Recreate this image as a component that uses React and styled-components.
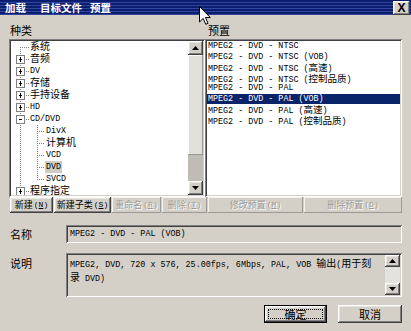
import React from "react"
import styled, { createGlobalStyle, css } from "styled-components"

const FACE = "#d4d0c8"
const NAVY = "#0a246a"
const MONO = 8.4

const GlobalStyle = createGlobalStyle`
  html, body {
    margin: 0;
    padding: 0;
    background: ${FACE};
  }
  body {
    font-family: "Noto Sans CJK SC", sans-serif;
  }
`

const raised = css`
  box-shadow: inset -1px -1px #404040, inset 1px 1px #ffffff,
    inset -2px -2px #808080, inset 2px 2px #e6e4de;
`

const sunken = css`
  box-shadow: inset 1px 1px #808080, inset -1px -1px #ffffff,
    inset 2px 2px #404040, inset -2px -2px ${FACE};
`

const Dialog = styled.div`
  position: relative;
  width: 411px;
  height: 331px;
  background: ${FACE};
  display: flex;
  flex-direction: column;
  overflow: hidden;
  font-family: "Noto Sans CJK SC", sans-serif;
`

const TitleBar = styled.div`
  height: 15px;
  display: flex;
  align-items: center;
  padding-left: 5px;
  background: repeating-linear-gradient(
    180deg,
    #0b1d6e 0px,
    #0b1d6e 2px,
    #30459b 2px,
    #30459b 3px
  );
`

const MenuItem = styled.span`
  color: #ffffff;
  font-weight: bold;
  font-size: 10.5px;
  line-height: 15px;
  margin-left: ${(p) => p.$ml || 0}px;
`

const CloseButton = styled.div`
  margin-left: auto;
  margin-right: 1px;
  width: 17px;
  height: 14px;
  background: ${FACE};
  ${raised};
  display: flex;
  align-items: center;
  justify-content: center;
  font-family: "Liberation Sans", sans-serif;
  font-weight: bold;
  font-size: 12px;
  line-height: 14px;
  color: #000;
`

const Body = styled.div`
  flex: 1;
  display: flex;
  flex-direction: column;
  padding: 0 9px;
`

const PanelLabels = styled.div`
  display: grid;
  grid-template-columns: 196px 1fr;
  height: 24px;
  align-items: end;
  padding-bottom: 2px;
  box-sizing: border-box;
`

const Caption = styled.span`
  font-size: 11px;
  line-height: 13px;
  color: #000;
  padding-left: ${(p) => p.$pl || 1}px;
`

const Panels = styled.div`
  display: grid;
  grid-template-columns: 196px 1fr;
  height: 158px;
`

const Sunken = styled.div`
  background: ${(p) => p.$bg || "#ffffff"};
  ${sunken};
  padding: 2px;
  box-sizing: border-box;
  display: flex;
  overflow: hidden;
`

const TreeContent = styled.div`
  flex: 1;
  overflow: hidden;
`

const TreeRow = styled.div`
  height: 12px;
  display: flex;
  align-items: center;
  white-space: nowrap;
  font-family: "Liberation Mono", monospace;
  font-size: ${MONO}px;
  line-height: 12px;
  color: #000;
`

const TreeLabel = styled.span`
  background: ${(p) => (p.$selected ? "#cfccc6" : "transparent")};
  padding: 0 1px;
  line-height: 12px;
`

const Han = styled.span`
  font-family: "Noto Sans CJK SC", sans-serif;
  font-size: ${(p) => p.$size || 10}px;
  line-height: inherit;
`

const GutterSvg = styled.svg`
  display: block;
  flex-shrink: 0;
`

const ScrollBar = styled.div`
  width: 15px;
  flex-shrink: 0;
  display: flex;
  flex-direction: column;
`

const ScrollButton = styled.div`
  height: ${(p) => p.$h || 14}px;
  flex-shrink: 0;
  background: ${FACE};
  ${raised};
  display: flex;
  align-items: center;
  justify-content: center;
`

const Thumb = styled.div`
  height: ${(p) => p.$h}px;
  flex-shrink: 0;
  background: #e2e0da;
  box-shadow: inset -1px -1px #9a9892, inset 1px 1px #ffffff;
`

const Track = styled.div`
  flex: 1;
  background: ${(p) => p.$bg || "#bfbcb6"};
`

const PresetList = styled.div`
  flex: 1;
  overflow: hidden;
`

const PresetRow = styled.div`
  height: 10.5px;
  line-height: 10.5px;
  white-space: nowrap;
  font-family: "Liberation Mono", monospace;
  font-size: ${MONO}px;
  padding-left: 1px;
  color: ${(p) => (p.$selected ? "#ffffff" : "#000000")};
  background: ${(p) => (p.$selected ? NAVY : "transparent")};
`

const ButtonRow = styled.div`
  display: flex;
  gap: 1px;
  height: 16px;
  padding-left: 1px;
`

const Button = styled.div`
  width: ${(p) => p.$w}px;
  height: 100%;
  flex-shrink: 0;
  background: ${FACE};
  ${(p) =>
    p.$disabled
      ? css`
          box-shadow: inset -1px -1px #9c9a94, inset 1px 1px #f4f3f0;
          color: #9c9a94;
          text-shadow: 1px 1px #ffffff;
        `
      : css`
          ${raised};
          color: #000;
        `}
  display: flex;
  align-items: center;
  justify-content: center;
  font-size: 9px;
  line-height: 12px;
  white-space: nowrap;
`

const Key = styled.span`
  font-family: "Liberation Mono", monospace;
  font-size: 8px;
  margin-left: 1px;
`

const FieldRow = styled.div`
  display: grid;
  grid-template-columns: 57px 1fr;
  align-items: ${(p) => p.$align || "center"};
  margin-top: ${(p) => p.$mt}px;
`

const FieldLabel = styled.span`
  font-size: 11px;
  line-height: 14px;
  padding-left: 1px;
  padding-top: ${(p) => p.$pt || 0}px;
  color: #000;
`

const Field = styled.div`
  height: ${(p) => p.$h}px;
  background: ${FACE};
  ${sunken};
  box-sizing: border-box;
  display: flex;
  padding: 2px;
`

const FieldText = styled.div`
  flex: 1;
  padding: ${(p) => p.$pad || "0 2px"};
  font-family: "Liberation Mono", monospace;
  font-size: ${MONO}px;
  line-height: ${(p) => p.$lh || 14}px;
  color: #000;
  white-space: nowrap;
`

const Footer = styled.div`
  display: flex;
  justify-content: flex-end;
  gap: 11px;
  margin-top: 8px;
  height: 18px;
`

const DialogButton = styled.div`
  width: ${(p) => p.$w}px;
  height: 100%;
  box-sizing: border-box;
  background: ${FACE};
  ${raised};
  ${(p) =>
    p.$default &&
    css`
      border: 1px solid #000;
      padding: 3px;
    `}
  display: flex;
  font-size: 11px;
  color: #000;
`

const FocusRing = styled.span`
  flex: 1;
  display: flex;
  align-items: center;
  justify-content: center;
  line-height: 12px;
  border: ${(p) => (p.$on ? "1px dotted #000" : "none")};
`

const Pointer = styled.svg`
  position: absolute;
  left: 199px;
  top: 6px;
`

const tree = [
  { label: "系统", line: "bottom" },
  { label: "音频", box: "+" },
  { label: "DV", box: "+" },
  { label: "存储", box: "+" },
  { label: "手持设备", box: "+" },
  { label: "HD", box: "+" },
  { label: "CD/DVD", box: "-" },
  { label: "DivX", level: 2 },
  { label: "计算机", level: 2 },
  { label: "VCD", level: 2 },
  { label: "DVD", level: 2, selected: true },
  { label: "SVCD", level: 2, line: "top" },
  { label: "程序指定", box: "+" },
]

const presets = [
  "MPEG2 - DVD - NTSC",
  "MPEG2 - DVD - NTSC (VOB)",
  "MPEG2 - DVD - NTSC (高速)",
  "MPEG2 - DVD - NTSC (控制品质)",
  "MPEG2 - DVD - PAL",
  "MPEG2 - DVD - PAL (VOB)",
  "MPEG2 - DVD - PAL (高速)",
  "MPEG2 - DVD - PAL (控制品质)",
]

const Mixed = ({ text, size }) =>
  text.split(/([\u3400-\u9fff]+)/).map((part, i) =>
    /[\u3400-\u9fff]/.test(part) ? (
      <Han key={i} $size={size}>
        {part}
      </Han>
    ) : (
      part
    )
  )

// dotted tree connector, with an optional expander box
const Gutter = ({ w, x, line = "full", branch = true, box }) => {
  const y1 = line === "bottom" ? 6 : 0
  const y2 = line === "top" ? 6 : 12
  return (
    <GutterSvg width={w} height={12}>
      {line !== "none" && (
        <line x1={x + 0.5} y1={y1} x2={x + 0.5} y2={y2} stroke="#808080" strokeDasharray="1 1" />
      )}
      {branch && <line x1={x} y1={6.5} x2={w} y2={6.5} stroke="#808080" strokeDasharray="1 1" />}
      {box && (
        <>
          <rect x={x - 3.5} y={2.5} width={8} height={8} fill="#fff" stroke="#808080" />
          <line x1={x - 1} y1={6.5} x2={x + 2} y2={6.5} stroke="#000" />
          {box === "+" && <line x1={x + 0.5} y1={4} x2={x + 0.5} y2={9} stroke="#000" />}
        </>
      )}
    </GutterSvg>
  )
}

const Arrow = ({ down }) => (
  <svg width="7" height="4" viewBox="0 0 7 4">
    <path d={down ? "M0 0 H7 L3.5 4 Z" : "M0 4 H7 L3.5 0 Z"} fill="#000" />
  </svg>
)

const BtnText = ({ label, k }) => (
  <>
    {label}
    <Key>
      (<u>{k}</u>)
    </Key>
  </>
)

export default function App() {
  return (
    <Dialog>
      <GlobalStyle />
      <TitleBar>
        <MenuItem>加载</MenuItem>
        <MenuItem $ml={14}>目标文件</MenuItem>
        <MenuItem $ml={8}>预置</MenuItem>
        <CloseButton>X</CloseButton>
      </TitleBar>

      <Body>
        <PanelLabels>
          <Caption>种类</Caption>
          <Caption $pl={3}>预置</Caption>
        </PanelLabels>

        <Panels>
          <Sunken>
            <TreeContent>
              {tree.map((node) => (
                <TreeRow key={node.label}>
                  {node.level === 2 ? (
                    <>
                      <Gutter w={18} x={9} branch={false} />
                      <Gutter w={16} x={8} line={node.line || "full"} />
                    </>
                  ) : (
                    <Gutter w={18} x={9} line={node.line || "full"} box={node.box} />
                  )}
                  <TreeLabel $selected={node.selected}>
                    <Mixed text={node.label} />
                  </TreeLabel>
                </TreeRow>
              ))}
            </TreeContent>
            <ScrollBar>
              <ScrollButton>
                <Arrow />
              </ScrollButton>
              <Thumb $h={100} />
              <Track />
              <ScrollButton>
                <Arrow down />
              </ScrollButton>
            </ScrollBar>
          </Sunken>

          <Sunken>
            <PresetList>
              {presets.map((p, i) => (
                <PresetRow key={p} $selected={i === 5}>
                  <Mixed text={p} size={9.5} />
                </PresetRow>
              ))}
            </PresetList>
          </Sunken>
        </Panels>

        <ButtonRow>
          <Button $w={43}>
            <BtnText label="新建" k="N" />
          </Button>
          <Button $w={57}>
            <BtnText label="新建子类" k="S" />
          </Button>
          <Button $w={49} $disabled>
            <BtnText label="重命名" k="R" />
          </Button>
          <Button $w={45} $disabled>
            <BtnText label="删除" k="T" />
          </Button>
          <Button $w={95} $disabled>
            <BtnText label="修改预置" k="M" />
          </Button>
          <Button $w={98} $disabled>
            <BtnText label="删除预置" k="D" />
          </Button>
        </ButtonRow>

        <FieldRow $mt={12}>
          <FieldLabel>名称</FieldLabel>
          <Field $h={18}>
            <FieldText>
              <Mixed text="MPEG2 - DVD - PAL (VOB)" />
            </FieldText>
          </Field>
        </FieldRow>

        <FieldRow $mt={10} $align="start">
          <FieldLabel $pt={3}>说明</FieldLabel>
          <Field $h={44}>
            <FieldText $pad="2px 2px" $lh={11}>
              <Mixed text="MPEG2, DVD, 720 x 576, 25.00fps, 6Mbps, PAL, VOB 输出(用于刻" />
              <br />
              <Mixed text="录 DVD)" />
            </FieldText>
            <ScrollBar>
              <ScrollButton $h={12}>
                <Arrow />
              </ScrollButton>
              <Track $bg="#e4e2dc" />
              <ScrollButton $h={12}>
                <Arrow down />
              </ScrollButton>
            </ScrollBar>
          </Field>
        </FieldRow>

        <Footer>
          <DialogButton $w={63} $default>
            <FocusRing $on>确定</FocusRing>
          </DialogButton>
          <DialogButton $w={64}>
            <FocusRing>取消</FocusRing>
          </DialogButton>
        </Footer>
      </Body>

      <Pointer width="12" height="19" viewBox="0 0 12 19">
        <path d="M0.5 0.5 V16 L4.2 12.4 L6.8 18.3 L9 17.3 L6.5 11.5 H11.3 Z" fill="#fff" stroke="#000" />
      </Pointer>
    </Dialog>
  )
}
